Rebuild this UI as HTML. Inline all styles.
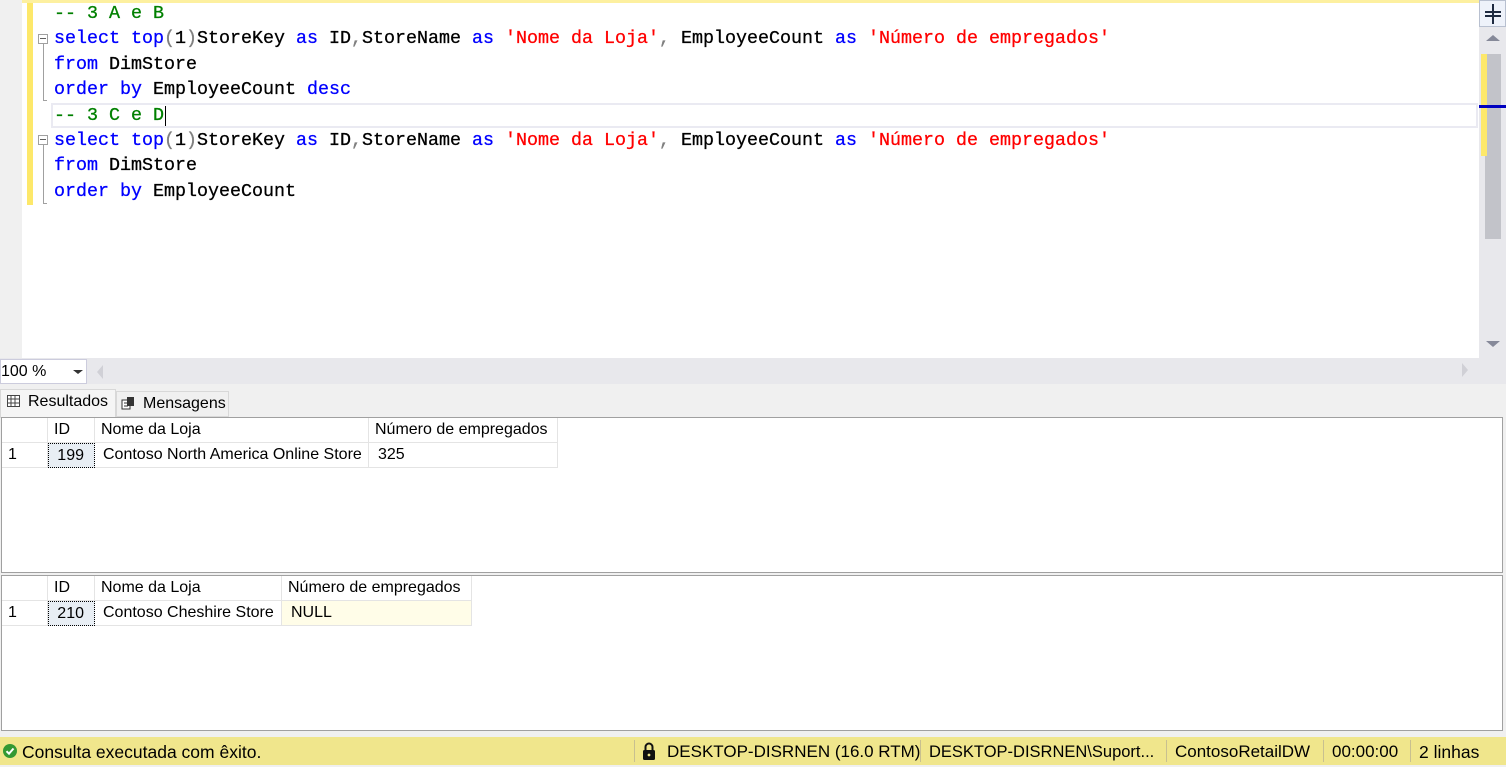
<!DOCTYPE html>
<html><head><meta charset="utf-8"><style>
*{margin:0;padding:0;box-sizing:border-box}
body{width:1506px;height:765px;overflow:hidden;background:#f0f0f0;font-family:"Liberation Sans",sans-serif;position:relative}
.abs{position:absolute}
.code{font-family:"Liberation Mono",monospace;font-size:18.33px;white-space:pre;color:#000;line-height:25.4px;-webkit-text-stroke:0.3px currentColor}
.k{color:#0000ff}.s{color:#ff0000}.c{color:#008000}.g{color:#808080}
.grid{position:absolute;left:1px;width:1502px;background:#fff;border:1px solid #a0a0a0;font-size:16px}
.cell{position:absolute;height:25px;line-height:24px;border-right:1px solid #e4e4e4;border-bottom:1px solid #e4e4e4;padding-left:6px;color:#000;white-space:nowrap}
</style></head><body>
<!-- editor -->
<div class="abs" style="left:0;top:0;width:1506px;height:358px;background:#fff"></div>
<div class="abs" style="left:0;top:0;width:1479px;height:3px;background:#fdf0a0"></div>
<div class="abs" style="left:0;top:0;width:22px;height:358px;background:#f0f0f0"></div>
<div class="abs" style="left:27px;top:3px;width:6px;height:202px;background:#fde86a"></div>
<!-- fold markers -->
<div class="abs" style="left:38px;top:34px;width:10px;height:10px;border:1px solid #a0a0a0;background:#fff"></div>
<div class="abs" style="left:40px;top:38px;width:6px;height:1px;background:#606060"></div>
<div class="abs" style="left:43px;top:44px;width:1px;height:57px;background:#a0a0a0"></div>
<div class="abs" style="left:43px;top:100px;width:4px;height:1px;background:#a0a0a0"></div>
<div class="abs" style="left:38px;top:135px;width:10px;height:10px;border:1px solid #a0a0a0;background:#fff"></div>
<div class="abs" style="left:40px;top:139px;width:6px;height:1px;background:#606060"></div>
<div class="abs" style="left:43px;top:145px;width:1px;height:59px;background:#a0a0a0"></div>
<div class="abs" style="left:43px;top:203px;width:4px;height:1px;background:#a0a0a0"></div>
<!-- current line -->
<div class="abs" style="left:51px;top:103px;width:1427px;height:25px;border:2px solid #eaeaf2"></div>
<div class="code abs" style="left:54px;top:1px"><span class="c">-- 3 A e B</span>
<span class="k">select</span> <span class="k">top</span><span class="g">(</span>1<span class="g">)</span>StoreKey <span class="k">as</span> ID<span class="g">,</span>StoreName <span class="k">as</span> <span class="s">'Nome da Loja'</span><span class="g">,</span> EmployeeCount <span class="k">as</span> <span class="s">'Número de empregados'</span>
<span class="k">from</span> DimStore
<span class="k">order</span> <span class="k">by</span> EmployeeCount <span class="k">desc</span>
<span class="c">-- 3 C e D</span>
<span class="k">select</span> <span class="k">top</span><span class="g">(</span>1<span class="g">)</span>StoreKey <span class="k">as</span> ID<span class="g">,</span>StoreName <span class="k">as</span> <span class="s">'Nome da Loja'</span><span class="g">,</span> EmployeeCount <span class="k">as</span> <span class="s">'Número de empregados'</span>
<span class="k">from</span> DimStore
<span class="k">order</span> <span class="k">by</span> EmployeeCount</div>
<div class="abs" style="left:165px;top:106px;width:1px;height:20px;background:#000"></div>
<!-- vertical scrollbar -->
<div class="abs" style="left:1479px;top:0;width:27px;height:358px;background:#e8e8ec"></div>
<div class="abs" style="left:1479px;top:0;width:27px;height:27px;background:#eef2fa;border:1px solid #b8c0d0"></div>
<div class="abs" style="left:1485px;top:11px;width:16px;height:2px;background:#1e2a40"></div>
<div class="abs" style="left:1485px;top:15px;width:16px;height:2px;background:#1e2a40"></div>
<div class="abs" style="left:1492px;top:4px;width:2px;height:20px;background:#1e2a40"></div>
<div class="abs" style="left:1486px;top:35px;border-left:7px solid transparent;border-right:7px solid transparent;border-bottom:6px solid #868999"></div>
<div class="abs" style="left:1485px;top:54px;width:16px;height:185px;background:#c2c3c9"></div>
<div class="abs" style="left:1481px;top:54px;width:6px;height:102px;background:#fde86a"></div>
<div class="abs" style="left:1479px;top:105px;width:27px;height:3px;background:#0000c0"></div>
<div class="abs" style="left:1486px;top:341px;border-left:7px solid transparent;border-right:7px solid transparent;border-top:6px solid #868999"></div>
<!-- zoom row -->
<div class="abs" style="left:0;top:358px;width:1506px;height:26px;background:#e8e8ec"></div>
<div class="abs" style="left:0;top:359px;width:87px;height:25px;background:#fff;border:1px solid #ccd;font-size:16px;line-height:23px">100 %</div>
<div class="abs" style="left:73px;top:370px;border-left:5px solid transparent;border-right:5px solid transparent;border-top:4px solid #333"></div>
<div class="abs" style="left:97px;top:365px;border-top:7px solid transparent;border-bottom:7px solid transparent;border-right:6px solid #d0d0d6"></div>
<div class="abs" style="left:1462px;top:363px;border-top:7px solid transparent;border-bottom:7px solid transparent;border-left:6px solid #d0d0d6"></div>
<!-- tabs -->
<div class="abs" style="left:0;top:389px;width:116px;height:29px;background:#f5f5f5;border:1px solid #d8d8d8;border-bottom:none;font-size:16px;line-height:24px;padding-left:27px">Resultados</div>
<svg class="abs" style="left:7px;top:395px" width="13" height="12"><rect x="0.5" y="0.5" width="12" height="11" fill="#fff" stroke="#444"/><path d="M0 4H13M0 8H13M4 0V12M8 0V12" stroke="#444"/></svg>
<div class="abs" style="left:116px;top:391px;width:113px;height:26px;background:#f0f0f0;border:1px solid #d8d8d8;font-size:16px;line-height:23px;padding-left:26px">Mensagens</div>
<svg class="abs" style="left:121px;top:396px" width="14" height="14"><rect x="1" y="4" width="8" height="9" fill="#fff" stroke="#333"/><rect x="6" y="1" width="7" height="9" fill="#333"/><path d="M3 7H7M3 10H7" stroke="#333"/></svg>
<!-- grid 1 -->
<div class="grid" style="top:417px;height:156px">
<div class="cell" style="left:0;top:0;width:46px"></div>
<div class="cell" style="left:46px;top:0;width:47px">ID</div>
<div class="cell" style="left:93px;top:0;width:274px">Nome da Loja</div>
<div class="cell" style="left:367px;top:0;width:189px">Número de empregados</div>
<div class="cell" style="left:0;top:25px;width:46px">1</div>
<div class="cell" style="left:46px;top:25px;width:47px;background:#e8eef4;border:1px dotted #000;text-align:right;padding-right:10px">199</div>
<div class="cell" style="left:93px;top:25px;width:274px;padding-left:8px">Contoso North America Online Store</div>
<div class="cell" style="left:367px;top:25px;width:189px;padding-left:9px">325</div>
</div>
<!-- grid 2 -->
<div class="grid" style="top:575px;height:156px">
<div class="cell" style="left:0;top:0;width:46px"></div>
<div class="cell" style="left:46px;top:0;width:47px">ID</div>
<div class="cell" style="left:93px;top:0;width:187px">Nome da Loja</div>
<div class="cell" style="left:280px;top:0;width:190px">Número de empregados</div>
<div class="cell" style="left:0;top:25px;width:46px">1</div>
<div class="cell" style="left:46px;top:25px;width:47px;background:#e8eef4;border:1px dotted #000;text-align:right;padding-right:10px">210</div>
<div class="cell" style="left:93px;top:25px;width:187px;padding-left:8px">Contoso Cheshire Store</div>
<div class="cell" style="left:280px;top:25px;width:190px;background:#fffde8;padding-left:9px">NULL</div>
</div>
<!-- status -->
<div class="abs" style="left:0;top:737px;width:1506px;height:28px;background:#f0e68c;font-size:17.5px;line-height:30px;white-space:nowrap">
<svg class="abs" style="left:3px;top:7px" width="14" height="14"><circle cx="7" cy="7" r="7" fill="#339933"/><path d="M3.5 7.2L6 9.7L10.5 4.5" stroke="#fff" stroke-width="2" fill="none"/></svg>
<span class="abs" style="left:22px">Consulta executada com êxito.</span>
<div class="abs" style="left:634px;top:3px;width:1px;height:22px;background:#c8c090"></div>
<svg class="abs" style="left:642px;top:5px" width="14" height="18"><path d="M3.5 8V5a3.5 3.5 0 0 1 7 0v3" stroke="#111" stroke-width="2" fill="none"/><rect x="1" y="8" width="12" height="10" rx="1.5" fill="#111"/><circle cx="7" cy="13" r="1.4" fill="#f0e68c"/></svg>
<span class="abs" style="left:667px;font-size:17px">DESKTOP-DISRNEN (16.0 RTM)</span>
<div class="abs" style="left:920px;top:3px;width:1px;height:22px;background:#c8c090"></div>
<span class="abs" style="left:929px;font-size:16.5px">DESKTOP-DISRNEN\Suport...</span>
<div class="abs" style="left:1166px;top:3px;width:1px;height:22px;background:#c8c090"></div>
<span class="abs" style="left:1175px;font-size:17px">ContosoRetailDW</span>
<div class="abs" style="left:1323px;top:3px;width:1px;height:22px;background:#c8c090"></div>
<span class="abs" style="left:1332px;font-size:17px">00:00:00</span>
<div class="abs" style="left:1410px;top:3px;width:1px;height:22px;background:#c8c090"></div>
<span class="abs" style="left:1419px">2 linhas</span>
</div>
</body></html>
